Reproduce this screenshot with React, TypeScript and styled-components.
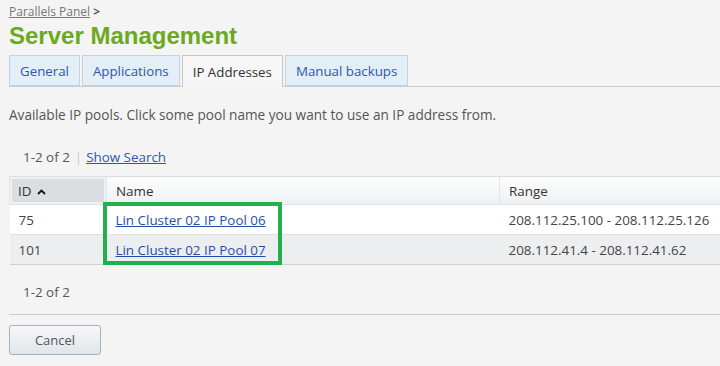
import React from 'react';
import styled, { createGlobalStyle } from 'styled-components';

const GlobalStyle = createGlobalStyle`
  html, body {
    margin: 0;
    padding: 0;
    background: #f4f4f4;
    font-family: "Open Sans", "Noto Sans", sans-serif;
    color: #4a4a4a;
    overflow: hidden;
  }
`;

const Page = styled.div`
  width: 720px;
  height: 366px;
  padding: 4px 0 0 9px;
  box-sizing: border-box;
`;

const Breadcrumb = styled.div`
  font-size: 12px;
  line-height: 16px;
  color: #777;

  a {
    color: #777;
    text-decoration: underline;
  }

  b {
    color: #555;
    margin-left: 3px;
  }
`;

const Title = styled.h1`
  margin: 2px 0 5px;
  font-family: "Liberation Sans", Arial, sans-serif;
  font-size: 24px;
  line-height: 28px;
  font-weight: bold;
  color: #6ba91f;
`;

const TabBar = styled.div`
  display: flex;
  gap: 2px;
  border-bottom: 1px solid #c9cdd0;
  height: 31px;
`;

const Tab = styled.div<{ $active?: boolean }>`
  padding: 0 10px;
  height: ${(p) => (p.$active ? 32 : 31)}px;
  box-sizing: border-box;
  display: flex;
  align-items: center;
  font-size: 13.3px;
  color: ${(p) => (p.$active ? '#333' : '#2a58b0')};
  background: ${(p) => (p.$active ? '#f6f6f6' : '#e4eef6')};
  border: 1px solid ${(p) => (p.$active ? '#c6c6c6' : '#c3d2de')};
  border-bottom: ${(p) => (p.$active ? 'none' : '1px solid #c3d2de')};
`;

const Description = styled.p`
  margin: 19px 0 0;
  font-size: 13.6px;
  line-height: 18px;
  color: #555;
`;

const Pager = styled.div<{ $top?: boolean }>`
  margin: ${(p) => (p.$top ? '24px 0 10px 14px' : '18px 0 0 14px')};
  font-size: 13.4px;
  line-height: 18px;
  color: #555;

  span {
    color: #ccc;
    margin: 0 4px 0 5px;
  }

  a {
    color: #2a58b0;
    text-decoration: underline;
  }
`;

const TableWrap = styled.div`
  position: relative;
`;

const Table = styled.table`
  width: 711px;
  table-layout: fixed;
  border-collapse: collapse;
  font-size: 13.4px;
  color: #444;
  border-top: 1px solid #dcdfe2;
  border-bottom: 1px solid #cfd3d6;
`;

const Th = styled.th<{ $sorted?: boolean }>`
  height: 27px;
  padding: 0 0 0 ${(p) => (p.$sorted ? 8 : 9)}px;
  text-align: left;
  font-weight: normal;
  color: #333;
  white-space: nowrap;
  background: ${(p) =>
    p.$sorted ? '#d9dee2' : 'linear-gradient(#fdfdfd, #eef0f2)'};
  border-left: 1px solid #e2e5e8;
  box-shadow: ${(p) => (p.$sorted ? 'inset 0 0 0 2px #eef0f2' : 'none')};
`;

const Td = styled.td<{ $alt?: boolean }>`
  height: 29px;
  padding: 0 0 0 9px;
  white-space: nowrap;
  background: ${(p) => (p.$alt ? '#eceef0' : '#fff')};
  border-top: 1px solid #dfe2e5;
  color: #444;

  a {
    color: #1f4fa8;
    text-decoration: underline;
  }
`;

const Highlight = styled.div`
  position: absolute;
  left: 94px;
  top: 26px;
  width: 179px;
  height: 63px;
  box-sizing: border-box;
  border: 4px solid #23b04a;
  pointer-events: none;
`;

const Divider = styled.hr`
  margin: 13px 0 0;
  border: none;
  border-top: 1px solid #cacaca;
`;

const CancelButton = styled.button`
  margin-top: 10px;
  width: 92px;
  height: 30px;
  border: 1px solid #a9b1b8;
  border-radius: 3px;
  background: linear-gradient(#f6f8fa, #dfe5ea);
  font-family: "Open Sans", sans-serif;
  font-size: 13px;
  color: #555;
`;

const SortArrow = () => (
  <svg width="9" height="6" viewBox="0 0 9 6" style={{ marginLeft: 6, verticalAlign: 1 }}>
    <path d="M1 5 L4.5 1.5 L8 5" fill="none" stroke="#111" strokeWidth="1.8" />
  </svg>
);

const pools = [
  { id: 75, name: 'Lin Cluster 02 IP Pool 06', range: '208.112.25.100 - 208.112.25.126' },
  { id: 101, name: 'Lin Cluster 02 IP Pool 07', range: '208.112.41.4 - 208.112.41.62' },
];

export default function App() {
  return (
    <Page>
      <GlobalStyle />
      <Breadcrumb>
        <a>Parallels Panel</a>
        <b>&gt;</b>
      </Breadcrumb>
      <Title>Server Management</Title>
      <TabBar>
        <Tab>General</Tab>
        <Tab>Applications</Tab>
        <Tab $active>IP Addresses</Tab>
        <Tab>Manual backups</Tab>
      </TabBar>
      <Description>
        Available IP pools. Click some pool name you want to use an IP address from.
      </Description>
      <Pager $top>
        1-2 of 2<span>|</span>
        <a>Show Search</a>
      </Pager>
      <TableWrap>
        <Table>
          <colgroup>
            <col style={{ width: 97 }} />
            <col style={{ width: 393 }} />
            <col />
          </colgroup>
          <thead>
            <tr>
              <Th $sorted>
                ID
                <SortArrow />
              </Th>
              <Th>Name</Th>
              <Th>Range</Th>
            </tr>
          </thead>
          <tbody>
            {pools.map((p, i) => (
              <tr key={p.id}>
                <Td $alt={i % 2 === 1}>{p.id}</Td>
                <Td $alt={i % 2 === 1}>
                  <a>{p.name}</a>
                </Td>
                <Td $alt={i % 2 === 1}>{p.range}</Td>
              </tr>
            ))}
          </tbody>
        </Table>
        <Highlight />
      </TableWrap>
      <Pager>1-2 of 2</Pager>
      <Divider />
      <CancelButton>Cancel</CancelButton>
    </Page>
  );
}
